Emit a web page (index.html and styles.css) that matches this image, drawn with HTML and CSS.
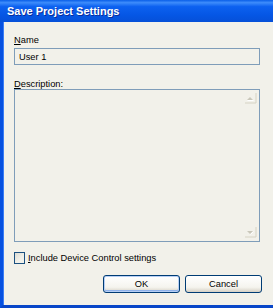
FILE: index.html
```html
<!DOCTYPE html>
<html lang="en">
<head>
  <meta charset="UTF-8" />
  <title>Save Project Settings</title>
  <link rel="stylesheet" href="styles.css">
</head>
<body>
  <div class="window">
    <div class="titlebar">Save Project Settings</div>
    <div class="frame">
      <label class="field-label" for="name"><u>N</u>ame</label>
      <input class="text-input" type="text" id="name" value="User 1" />

      <label class="field-label desc-label" for="desc"><u>D</u>escription:</label>
      <div class="memo">
        <textarea id="desc"></textarea>
        <svg class="arrow arrow-up" width="13" height="13" viewBox="0 0 13 13">
          <path d="M3 8 L6 5 L9 8 Z" fill="#c9c7ba" />
          <path d="M1 11 H12 V1" fill="none" stroke="#d6d3c4" />
          <path d="M3.5 8.5 H9.5" stroke="#ffffff" />
        </svg>
        <svg class="arrow arrow-down" width="13" height="13" viewBox="0 0 13 13">
          <path d="M3 5 L6 8 L9 5 Z" fill="#c9c7ba" />
          <path d="M1 11 H12 V1" fill="none" stroke="#d6d3c4" />
          <path d="M6.5 8.5 L9.5 5.5" stroke="#ffffff" />
        </svg>
      </div>

      <label class="check-row">
        <span class="checkbox"></span>
        <span><u>I</u>nclude Device Control settings</span>
      </label>

      <div class="buttons">
        <button type="button" class="btn btn-default">OK</button>
        <button type="button" class="btn">Cancel</button>
      </div>
    </div>
  </div>
</body>
</html>
```

FILE: styles.css
```css
html, body {
  margin: 0;
  padding: 0;
}
body {
  width: 273px;
  height: 308px;
  overflow: hidden;
  font-family: "Liberation Sans", Arial, sans-serif;
  font-size: 9.3px;
  color: #000;
}
.window {
  display: flex;
  flex-direction: column;
  width: 273px;
  height: 308px;
}
.titlebar {
  height: 22px;
  line-height: 22px;
  padding-left: 7px;
  color: #fff;
  font-weight: bold;
  font-size: 11px;
  text-shadow: 1px 1px 0 #0a2c9c;
  background: linear-gradient(to bottom, #0a5fe8 0%, #3d8cfb 12%, #0c61f0 30%, #0556e4 70%, #0650d8 100%);
}
.frame {
  flex: 1;
  display: flex;
  flex-direction: column;
  background: #f2f1ea;
  border-left: 3px solid #0751e0;
  border-bottom: 3px solid #0846c8;
  box-shadow: inset 1px 0 0 #3a7df5;
  padding: 11px 0 0 11px;
}
.field-label {
  display: block;
  height: 15px;
  line-height: 15px;
}
.text-input {
  box-sizing: border-box;
  width: 246px;
  height: 17px;
  margin: 0;
  padding: 0 4px;
  border: 1px solid #7f9db9;
  background: #f2f1ea;
  font-family: inherit;
  font-size: 9.3px;
}
.desc-label {
  margin-top: 14px;
  height: 10px;
  line-height: 10px;
}
.memo {
  position: relative;
  width: 246px;
  height: 153px;
}
.memo textarea {
  box-sizing: border-box;
  display: block;
  width: 100%;
  height: 100%;
  margin: 0;
  border: 1px solid #7f9db9;
  background: #f2f1ea;
  resize: none;
  outline: none;
}
.arrow {
  position: absolute;
  right: 3px;
}
.arrow-up {
  top: 3px;
}
.arrow-down {
  bottom: 3px;
}
.check-row {
  display: flex;
  align-items: center;
  gap: 3px;
  margin-top: 10px;
  height: 12px;
}
.checkbox {
  box-sizing: border-box;
  width: 11px;
  height: 12px;
  border: 1px solid #1c5180;
  background: linear-gradient(135deg, #dcdbd3 0%, #f2f1ea 60%);
}
.buttons {
  display: flex;
  gap: 5px;
  margin-top: 11px;
  padding-left: 89px;
}
.btn {
  box-sizing: border-box;
  width: 77px;
  height: 18px;
  margin: 0;
  padding: 0;
  border: 1px solid #003c74;
  border-radius: 3px;
  background: linear-gradient(to bottom, #ffffff 0%, #f5f4ee 70%, #d6d0c5 100%);
  font-family: inherit;
  font-size: 9.3px;
  color: #000;
}
.btn-default {
  box-shadow: inset 0 0 0 1px #b7cff5, inset 0 -1px 0 1px #8fb2ea;
}
```
